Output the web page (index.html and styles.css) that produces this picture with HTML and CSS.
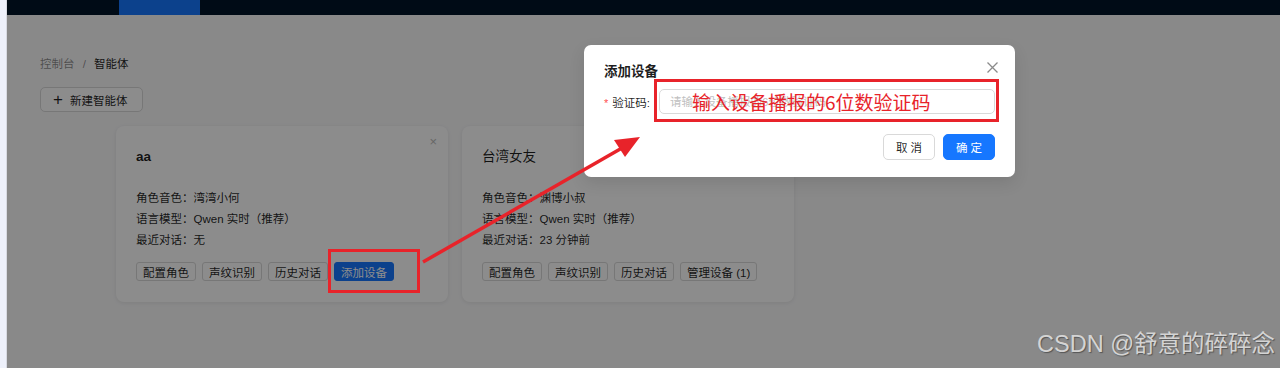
FILE: index.html
```html
<!DOCTYPE html>
<html lang="zh-CN">
<head>
  <meta charset="UTF-8">
  <title>智能体 - 添加设备</title>
  <link rel="stylesheet" href="styles.css">
</head>
<body>
  <div class="side-strip"></div>
  <div class="app">
    <div class="topbar">
      <div class="topbar-tab"></div>
    </div>
    <div class="main">
      <div class="breadcrumb">
        <span class="crumb-muted">控制台</span>
        <span class="crumb-sep">/</span>
        <span>智能体</span>
      </div>
      <button class="btn-new"><span class="plus">+</span>新建智能体</button>
      <div class="card-list">
        <div class="agent-card">
          <span class="card-close">×</span>
          <div class="card-title">aa</div>
          <div class="card-info">
            <p>角色音色：湾湾小何</p>
            <p>语言模型：Qwen 实时（推荐）</p>
            <p>最近对话：无</p>
          </div>
          <div class="card-actions">
            <button class="btn-sm">配置角色</button>
            <button class="btn-sm">声纹识别</button>
            <button class="btn-sm">历史对话</button>
            <button class="btn-sm primary">添加设备</button>
          </div>
        </div>
        <div class="agent-card">
          <div class="card-title cjk">台湾女友</div>
          <div class="card-info">
            <p>角色音色：渊博小叔</p>
            <p>语言模型：Qwen 实时（推荐）</p>
            <p>最近对话：23 分钟前</p>
          </div>
          <div class="card-actions">
            <button class="btn-sm">配置角色</button>
            <button class="btn-sm">声纹识别</button>
            <button class="btn-sm">历史对话</button>
            <button class="btn-sm">管理设备 (1)</button>
          </div>
        </div>
      </div>
    </div>
    <div class="mask"></div>
  </div>

  <div class="modal">
    <span class="modal-close">
      <svg width="11" height="11" viewBox="0 0 11 11"><path d="M0.5 0.5 L10.5 10.5 M10.5 0.5 L0.5 10.5" stroke="#8a8a8a" stroke-width="1.3" fill="none"/></svg>
    </span>
    <div class="modal-title">添加设备</div>
    <div class="form-row">
      <label class="form-label"><span class="req">*</span>验证码:</label>
      <input class="form-input" type="text" placeholder="请输入设备播报的6位数验证码">
    </div>
    <div class="modal-footer">
      <button class="btn-md">取 消</button>
      <button class="btn-md primary">确 定</button>
    </div>
  </div>

  <svg class="annotations" width="1280" height="368" viewBox="0 0 1280 368">
    <rect x="329.5" y="250.5" width="89" height="41" fill="none" stroke="#e8232a" stroke-width="3"/>
    <rect x="655.5" y="80.5" width="342" height="40" fill="none" stroke="#e8232a" stroke-width="3"/>
    <line x1="423" y1="262" x2="622" y2="148" stroke="#e8232a" stroke-width="3.5"/>
    <polygon points="640,137 625,157 614,140" fill="#e8232a"/>
  </svg>
  <div class="note-text">输入设备播报的6位数验证码</div>

  <div class="watermark">CSDN @舒意的碎碎念</div>
</body>
</html>
```

FILE: styles.css
```css
* {
  margin: 0;
  padding: 0;
  box-sizing: border-box;
}
body {
  width: 1280px;
  height: 368px;
  overflow: hidden;
  display: flex;
  position: relative;
  background: #f5f6f8;
  font-family: "Liberation Sans", "Noto Sans CJK SC", sans-serif;
  color: rgba(0, 0, 0, 0.88);
}
.side-strip {
  width: 7px;
  background: #eef1fb;
  border-right: 1px solid #d8dae2;
}
.app {
  flex: 1;
  position: relative;
  background: #f9f9fa;
}
.topbar {
  height: 15px;
  background: #001529;
  padding-left: 112px;
}
.topbar-tab {
  width: 81px;
  height: 15px;
  background: #1677ff;
}
.main {
  padding: 40px 0 0 33px;
}
.breadcrumb {
  font-size: 11.5px;
  line-height: 18px;
  margin-bottom: 14px;
}
.crumb-muted {
  color: rgba(0, 0, 0, 0.45);
}
.crumb-sep {
  color: rgba(0, 0, 0, 0.45);
  margin: 0 5px;
}
.btn-new {
  display: flex;
  align-items: center;
  height: 25px;
  width: 103px;
  padding: 0 12px;
  border: 1px solid #d9d9d9;
  border-radius: 5px;
  background: #fff;
  font-family: inherit;
  font-size: 11.5px;
  color: rgba(0, 0, 0, 0.88);
}
.btn-new .plus {
  font-size: 17px;
  font-weight: 300;
  margin-right: 7px;
  line-height: 1;
}
.card-list {
  display: flex;
  gap: 14px;
  margin: 14px 0 0 76px;
}
.agent-card {
  position: relative;
  width: 332px;
  height: 176px;
  background: #fff;
  border-radius: 8px;
  box-shadow: 0 1px 4px rgba(0, 0, 0, 0.08);
  padding: 20px 20px 0 20px;
}
.card-close {
  position: absolute;
  top: 8px;
  right: 11px;
  font-size: 13px;
  color: #bbb;
}
.card-title {
  font-size: 13.5px;
  font-weight: 700;
  line-height: 22px;
  margin-bottom: 20px;
}
.card-title.cjk {
  font-weight: 400;
}
.card-info p {
  font-size: 11.5px;
  line-height: 21px;
}
.card-actions {
  display: flex;
  gap: 6px;
  margin-top: 11px;
}
.btn-sm {
  height: 19px;
  padding: 0 6px;
  border: 1px solid #d9d9d9;
  border-radius: 3px;
  background: #fff;
  font-family: inherit;
  font-size: 11.5px;
  color: rgba(0, 0, 0, 0.88);
}
.btn-sm.primary {
  background: #1677ff;
  border-color: #1677ff;
  color: #fff;
}
.mask {
  position: absolute;
  inset: 0;
  background: rgba(0, 0, 0, 0.45);
}
.modal {
  position: absolute;
  left: 584px;
  top: 45px;
  width: 431px;
  height: 132px;
  background: #fff;
  border-radius: 7px;
  box-shadow: 0 6px 16px rgba(0, 0, 0, 0.1);
  padding: 18px 20px 0 20px;
}
.modal-close {
  position: absolute;
  top: 17px;
  right: 17px;
  display: flex;
}
.modal-title {
  font-size: 13.5px;
  font-weight: 700;
  line-height: 18px;
  margin-bottom: 8px;
}
.form-row {
  display: flex;
  align-items: center;
}
.form-label {
  font-size: 11.5px;
  width: 55px;
  color: rgba(0, 0, 0, 0.88);
}
.req {
  color: #ff4d4f;
  margin-right: 4px;
  font-size: 11px;
}
.form-input {
  flex: 1;
  height: 25px;
  border: 1px solid #d9d9d9;
  border-radius: 5px;
  padding: 0 10px;
  font-family: inherit;
  font-size: 11.5px;
  outline: none;
}
.form-input::placeholder {
  color: #bfbfbf;
}
.modal-footer {
  display: flex;
  justify-content: flex-end;
  gap: 8px;
  margin-top: 20px;
}
.btn-md {
  width: 52px;
  height: 26px;
  border: 1px solid #d9d9d9;
  border-radius: 5px;
  background: #fff;
  font-family: inherit;
  font-size: 11.5px;
  color: rgba(0, 0, 0, 0.88);
}
.btn-md.primary {
  background: #1677ff;
  border-color: #1677ff;
  color: #fff;
}
.annotations {
  position: absolute;
  left: 0;
  top: 0;
}
.note-text {
  position: absolute;
  left: 692px;
  top: 90px;
  font-family: "Noto Sans CJK SC", sans-serif;
  font-size: 19px;
  line-height: 24px;
  color: #e8232a;
  white-space: nowrap;
}
.watermark {
  position: absolute;
  right: 5px;
  bottom: 11px;
  font-family: "Liberation Sans", "Noto Sans CJK SC", sans-serif;
  font-size: 23.5px;
  line-height: 26px;
  color: #d4d4d4;
  text-shadow: 1px 1px 1px #555;
  white-space: nowrap;
}
```
